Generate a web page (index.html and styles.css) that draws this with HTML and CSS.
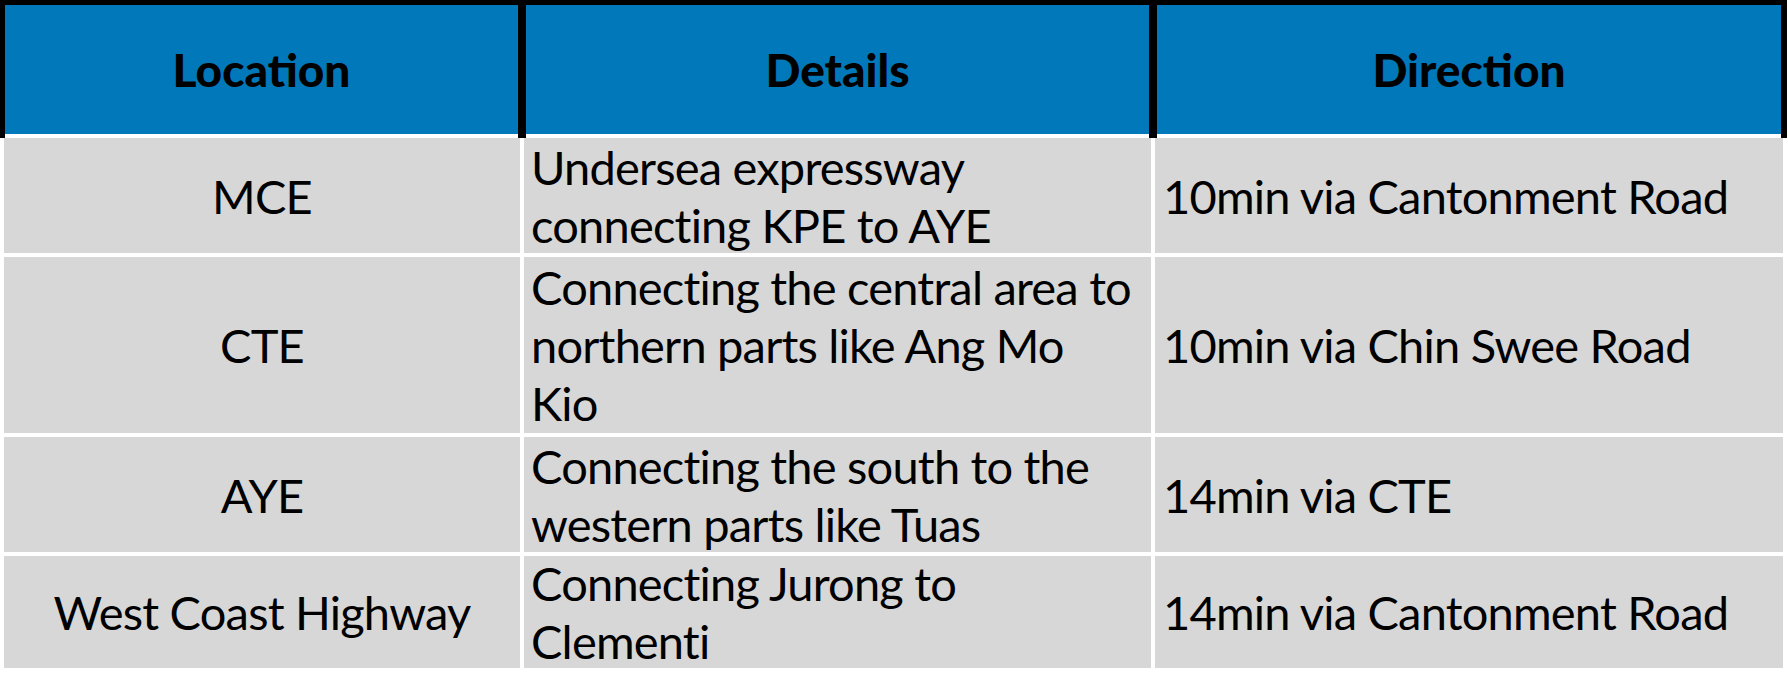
FILE: index.html
```html
<!DOCTYPE html>
<html lang="en">
<head>
<meta charset="utf-8">
<title>Expressways</title>
<link rel="stylesheet" href="styles.css">
</head>
<body>
<div class="table">
  <div class="head">
    <div class="th">Location</div>
    <div class="th">Details</div>
    <div class="th">Direction</div>
  </div>
  <div class="body">
    <div class="td loc">MCE</div>
    <div class="td det">Undersea expressway<br>connecting KPE to AYE</div>
    <div class="td dir">10min via Cantonment Road</div>

    <div class="td loc">CTE</div>
    <div class="td det">Connecting the central area to<br>northern parts like Ang Mo<br>Kio</div>
    <div class="td dir">10min via Chin Swee Road</div>

    <div class="td loc">AYE</div>
    <div class="td det">Connecting the south to the<br>western parts like Tuas</div>
    <div class="td dir">14min via CTE</div>

    <div class="td loc">West Coast Highway</div>
    <div class="td det">Connecting Jurong to<br>Clementi</div>
    <div class="td dir">14min via Cantonment Road</div>
  </div>
</div>
</body>
</html>
```
FILE: styles.css
```css
html, body {
  margin: 0;
  padding: 0;
  background: #ffffff;
}
.table {
  width: 1788px;
}
.head {
  display: grid;
  grid-template-columns: 513px 623px 624px;
  column-gap: 8px;
  width: 1787px;
  box-sizing: border-box;
  padding: 5px 6px 0 5px;
  background: #000000;
}
.th {
  height: 129px;
  background: #0078b9;
  border-bottom: 4px solid #ffffff;
  display: flex;
  align-items: center;
  justify-content: center;
  font-family: "Lato", sans-serif;
  font-weight: 900;
  font-size: 46px;
  color: #000000;
}
.body {
  display: grid;
  grid-template-columns: 516px 627px 628px;
  grid-template-rows: 115px 176px 115px 112px;
  gap: 4px;
  padding-left: 4px;
}
.td {
  background: #d7d7d7;
  display: flex;
  align-items: center;
  font-family: "Lato", sans-serif;
  font-weight: 400;
  font-size: 47px;
  letter-spacing: -0.8px;
  line-height: 58px;
  color: #000000;
  white-space: nowrap;
}
.loc {
  justify-content: center;
  text-align: center;
}
.det {
  padding-left: 7px;
}
.dir {
  padding-left: 8px;
}
```
